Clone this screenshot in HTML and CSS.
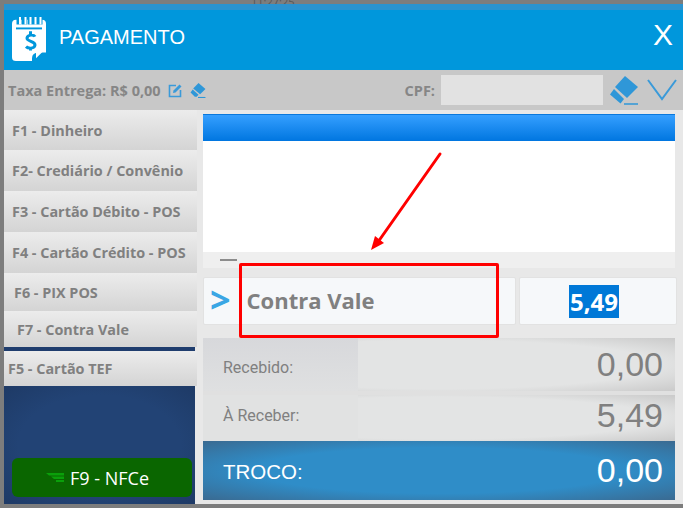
FILE: index.html
```html
<!DOCTYPE html>
<html lang="pt-BR">
<head>
  <meta charset="UTF-8">
  <title>Pagamento</title>
  <meta name="viewport" content="width=device-width, initial-scale=1">
  <link rel="stylesheet" href="styles.css">
</head>
<body>
  <div class="backdrop-top"><span>11:27:25</span></div>
  <div class="dialog">
    <div class="title-strip"></div>
    <header class="title-bar">
      <svg class="title-icon" width="34" height="46" viewBox="0 0 34 48" preserveAspectRatio="none">
        <path d="M4 5h26a4 4 0 0 1 4 4v30h-8a6 6 0 0 0-6 6v3H4a4 4 0 0 1-4-4V9a4 4 0 0 1 4-4z" fill="#fff"/>
        <path d="M7 2v8M12.500 2v8M18 2v8M23 2v8M28 2v8" stroke="#0097dc" stroke-width="5"/>
        <path d="M8 2v8M13.500 2v8M18.500 2v8M23.500 2v8M28.500 2v8" stroke="#fff" stroke-width="2"/>
        <path d="M4 14h26" stroke="#0097dc" stroke-width="2"/>
        <path d="M24 45l9-9h-7a2 2 0 0 0-2 2z" fill="#fff"/>
        <path d="M23 22.500c-1-2-7.500-2.500-8 1.500-.5 4 8.500 3 8 7.500-.5 4-7 3.500-9 1.500M18.500 17v3M18.500 34v3" fill="none" stroke="#0097dc" stroke-width="3"/>
      </svg>
      <h1 class="title">PAGAMENTO</h1>
      <span class="close">X</span>
    </header>
    <div class="toolbar">
      <span class="fee">Taxa Entrega: R$ 0,00</span>
      <svg class="edit-icon" width="15" height="15" viewBox="0 0 15 15">
        <path d="M8 2.500H1.500v11h11V7" fill="none" stroke="#3a9ad9" stroke-width="1.600"/>
        <path d="M5.500 7.500L11.500 1.500l2 2-6 6-2.500.5z" fill="#3a9ad9"/>
      </svg>
      <svg class="eraser-small" width="16" height="16" viewBox="0 0 30 30">
        <path d="M16 2L29 13 19 23 6 12z" fill="#2f97d8"/>
        <path d="M5 14L16 24l-3.500 3.500H9L1 19.500z" fill="#2f97d8"/>
        <path d="M15 29h14" stroke="#2f97d8" stroke-width="2"/>
      </svg>
      <span class="cpf-label">CPF:</span>
      <div class="cpf-input"></div>
      <svg class="eraser-big" width="30" height="30" viewBox="0 0 30 30">
        <path d="M16 1L29 12 18 23 6 12z" fill="#2f97d8"/>
        <path d="M5 14L15 24l-3.500 4.500L1 19.500z" fill="#2f97d8"/>
        <path d="M15 29h14" stroke="#2f97d8" stroke-width="1.500"/>
      </svg>
      <svg class="chevron" width="30" height="22" viewBox="0 0 30 22">
        <path d="M1 1l14 19L29 1" fill="none" stroke="#3a9ad9" stroke-width="2"/>
      </svg>
    </div>
    <div class="content">
      <aside class="sidebar">
        <div class="method m-tall">F1 - Dinheiro</div>
        <div class="method m-tall">F2- Crediário / Convênio</div>
        <div class="method m-tall">F3 - Cartão Débito - POS</div>
        <div class="method m-tall">F4 - Cartão Crédito - POS</div>
        <div class="method m-pix">F6 - PIX POS</div>
        <div class="method m-vale">F7 - Contra Vale</div>
        <div class="vale-gap"></div>
        <div class="method m-tef">F5 - Cartão TEF</div>
        <div class="sidebar-foot">
          <button class="nfce">
            <svg width="18" height="9" viewBox="0 0 18 9">
              <path d="M0 0h18v2.500H3zM5 3.500h13V6H8zM10 7h8v2h-8z" fill="#0aa00a"/>
            </svg>
            F9 - NFCe
          </button>
        </div>
      </aside>
      <main class="main">
        <div class="grid-box">
          <div class="grid-head"></div>
          <div class="grid-body"></div>
          <div class="grid-foot"><span class="grid-dash"></span></div>
        </div>
        <div class="entry">
          <div class="entry-name">
            <span class="caret">&gt;</span>
            <span class="entry-text">Contra Vale</span>
          </div>
          <div class="entry-value"><span class="selected">5,49</span></div>
        </div>
        <div class="totals">
          <div class="total-row row-first">
            <span class="total-label">Recebido:</span>
            <span class="total-value">0,00</span>
          </div>
          <div class="total-row row-second">
            <span class="total-label">À Receber:</span>
            <span class="total-value">5,49</span>
          </div>
          <div class="troco">
            <span class="troco-label">TROCO:</span>
            <span class="troco-value">0,00</span>
          </div>
        </div>
      </main>
    </div>
  </div>
  <!-- annotation drawn on top of the screenshot -->
  <div class="callout"></div>
  <svg class="arrow" width="80" height="110" viewBox="0 0 80 110">
    <path d="M69 3L7 91" stroke="#f00" stroke-width="3" stroke-linecap="round"/>
    <path d="M0 99L4 85 13 92z" fill="#f00"/>
  </svg>
</body>
</html>
```

FILE: styles.css
```css
* {
  box-sizing: border-box;
}
html, body {
  margin: 0;
  height: 508px;
  overflow: hidden;
}
body {
  position: relative;
  background: #7d7d7d;
  padding: 4px 0 4px 4px;
  font-family: "Open Sans", "Noto Sans", sans-serif;
}
.backdrop-top {
  position: absolute;
  top: 0;
  left: 0;
  right: 0;
  height: 4px;
  overflow: hidden;
  font-size: 11px;
  line-height: 4px;
  color: #555;
}
.backdrop-top span {
  position: absolute;
  left: 251px;
  top: 0;
}
.dialog {
  height: 500px;
  background: #e8e8e8;
  display: flex;
  flex-direction: column;
}
.title-strip {
  height: 6px;
  background: #2a93cf;
}
.title-bar {
  height: 60px;
  background: #0097dc;
  display: flex;
  align-items: center;
  padding: 0 10px 0 8px;
  color: #fff;
}
.title-icon {
  margin: 0 13px 4px 0;
}
.title {
  margin: 0 0 5px 0;
  font: 400 20px "Liberation Sans", Arial, sans-serif;
  flex: 1;
}
.close {
  font: 400 30px "Liberation Sans", Arial, sans-serif;
  margin-bottom: 10px;
}
.toolbar {
  height: 40px;
  background: #c8c8c8;
  display: flex;
  align-items: center;
  padding-left: 4px;
  color: #868686;
  font-weight: 700;
  font-size: 14.5px;
}
.edit-icon {
  margin-left: 7px;
}
.eraser-small {
  margin-left: 7px;
}
.cpf-label {
  margin-left: auto;
  margin-right: 6px;
}
.cpf-input {
  width: 162px;
  height: 30px;
  background: #e2e2e2;
  margin-right: 6px;
}
.chevron {
  margin-left: 8px;
  margin-right: 6px;
}
.content {
  flex: 1;
  display: flex;
  min-height: 0;
}
.sidebar {
  width: 193px;
  display: flex;
  flex-direction: column;
  background: #e8e8e8;
}
.method {
  background: linear-gradient(#ececec, #d4d4d4);
  color: #808080;
  font-weight: 700;
  font-size: 14.4px;
  padding-left: 8px;
  display: flex;
  align-items: center;
}
.m-tall {
  height: 41px;
}
.m-tall:first-child {
  height: 40px;
}
.m-pix {
  height: 38px;
  padding-left: 10px;
}
.m-vale {
  height: 36px;
  padding-left: 13px;
}
.vale-gap {
  height: 4px;
  margin-right: 2px;
  background: #1f3d6e;
}
.m-tef {
  height: 35px;
  padding-left: 4px;
}
.sidebar-foot {
  flex: 1;
  margin-right: 2px;
  background: radial-gradient(ellipse at center, #224375 60%, #1e3a66 100%);
  padding: 72px 0 0 8px;
}
.nfce {
  width: 180px;
  height: 39px;
  border: 0;
  border-radius: 6px;
  background: #0a6600;
  color: #fff;
  font: 400 18px "Open Sans", "Noto Sans", sans-serif;
  display: flex;
  align-items: center;
  justify-content: center;
  gap: 6px;
  padding: 0 9px 0 0;
}
.main {
  flex: 1;
  padding: 4px 8px 4px 6px;
  display: flex;
  flex-direction: column;
}
.grid-box {
  height: 154px;
  background: #fff;
  display: flex;
  flex-direction: column;
}
.grid-head {
  height: 27px;
  background: linear-gradient(#359fff, #0076e0);
  border-top: 1px solid #0a78dc;
}
.grid-body {
  flex: 1;
}
.grid-foot {
  height: 16px;
  background: #efefef;
  padding: 7px 0 0 17px;
}
.grid-dash {
  display: block;
  width: 17px;
  height: 2px;
  background: #8c8c8c;
}
.entry {
  display: flex;
  gap: 3px;
  height: 48px;
  margin-top: 9px;
  margin-right: -2px;
}
.entry-name, .entry-value {
  background: #f6f8fa;
  border: 1px solid #e2e2e2;
  border-radius: 2px;
  display: flex;
  align-items: center;
}
.entry-name {
  width: 313px;
  padding-left: 6px;
  gap: 16px;
  font-size: 22px;
  font-weight: 700;
  color: #808080;
}
.entry-text {
  margin-bottom: 2px;
}
.caret {
  color: #3aa6e4;
  font-size: 36px;
  font-weight: 700;
  line-height: 1;
  margin-top: -2px;
}
.entry-value {
  flex: 1;
  padding-left: 49px;
  font-size: 24px;
  font-weight: 700;
  color: #fff;
}
.selected {
  background: #0078d7;
  line-height: 33px;
  padding: 0 1px;
}
.totals {
  margin-top: 13px;
  display: flex;
  flex-direction: column;
  height: 162px;
  background: #e0e0e0;
}
.total-row {
  display: flex;
  align-items: center;
  justify-content: space-between;
  padding-right: 12px;
  background-repeat: no-repeat;
  background-size: 155px 100%, 100% 100%;
  color: #808080;
  font-family: Roboto, sans-serif;
}
.row-first {
  height: 53px;
  margin-bottom: 4px;
  background-image: linear-gradient(#d7d8db, #dfe0e1), radial-gradient(ellipse at center, #e3e4e4 65%, #cacaca 100%);
}
.row-first .total-label {
  margin-top: 5px;
}
.row-second {
  height: 46px;
  background-image: linear-gradient(#e1e2e2, #e1e2e2), radial-gradient(ellipse at center, #e3e4e4 65%, #cacaca 100%);
}
.row-second .total-label, .row-second .total-value {
  margin-bottom: 5px;
}
.total-label {
  padding-left: 20px;
  font-size: 16px;
}
.total-value {
  font: 400 34px "Liberation Sans", Arial, sans-serif;
}
.troco {
  flex: 1;
  display: flex;
  align-items: center;
  justify-content: space-between;
  padding: 0 12px 0 20px;
  background: radial-gradient(ellipse at center, #2f8dc8 55%, #3a6a91 100%);
  color: #fff;
}
.troco-label {
  font: 400 20.500px "Liberation Sans", Arial, sans-serif;
  margin-top: 3px;
}
.troco-value {
  font: 400 34px "Liberation Sans", Arial, sans-serif;
}
.callout {
  position: absolute;
  left: 239px;
  top: 263px;
  width: 260px;
  height: 75px;
  border: 3px solid #f00;
  border-radius: 2px;
}
.arrow {
  position: absolute;
  left: 371px;
  top: 151px;
}
```
